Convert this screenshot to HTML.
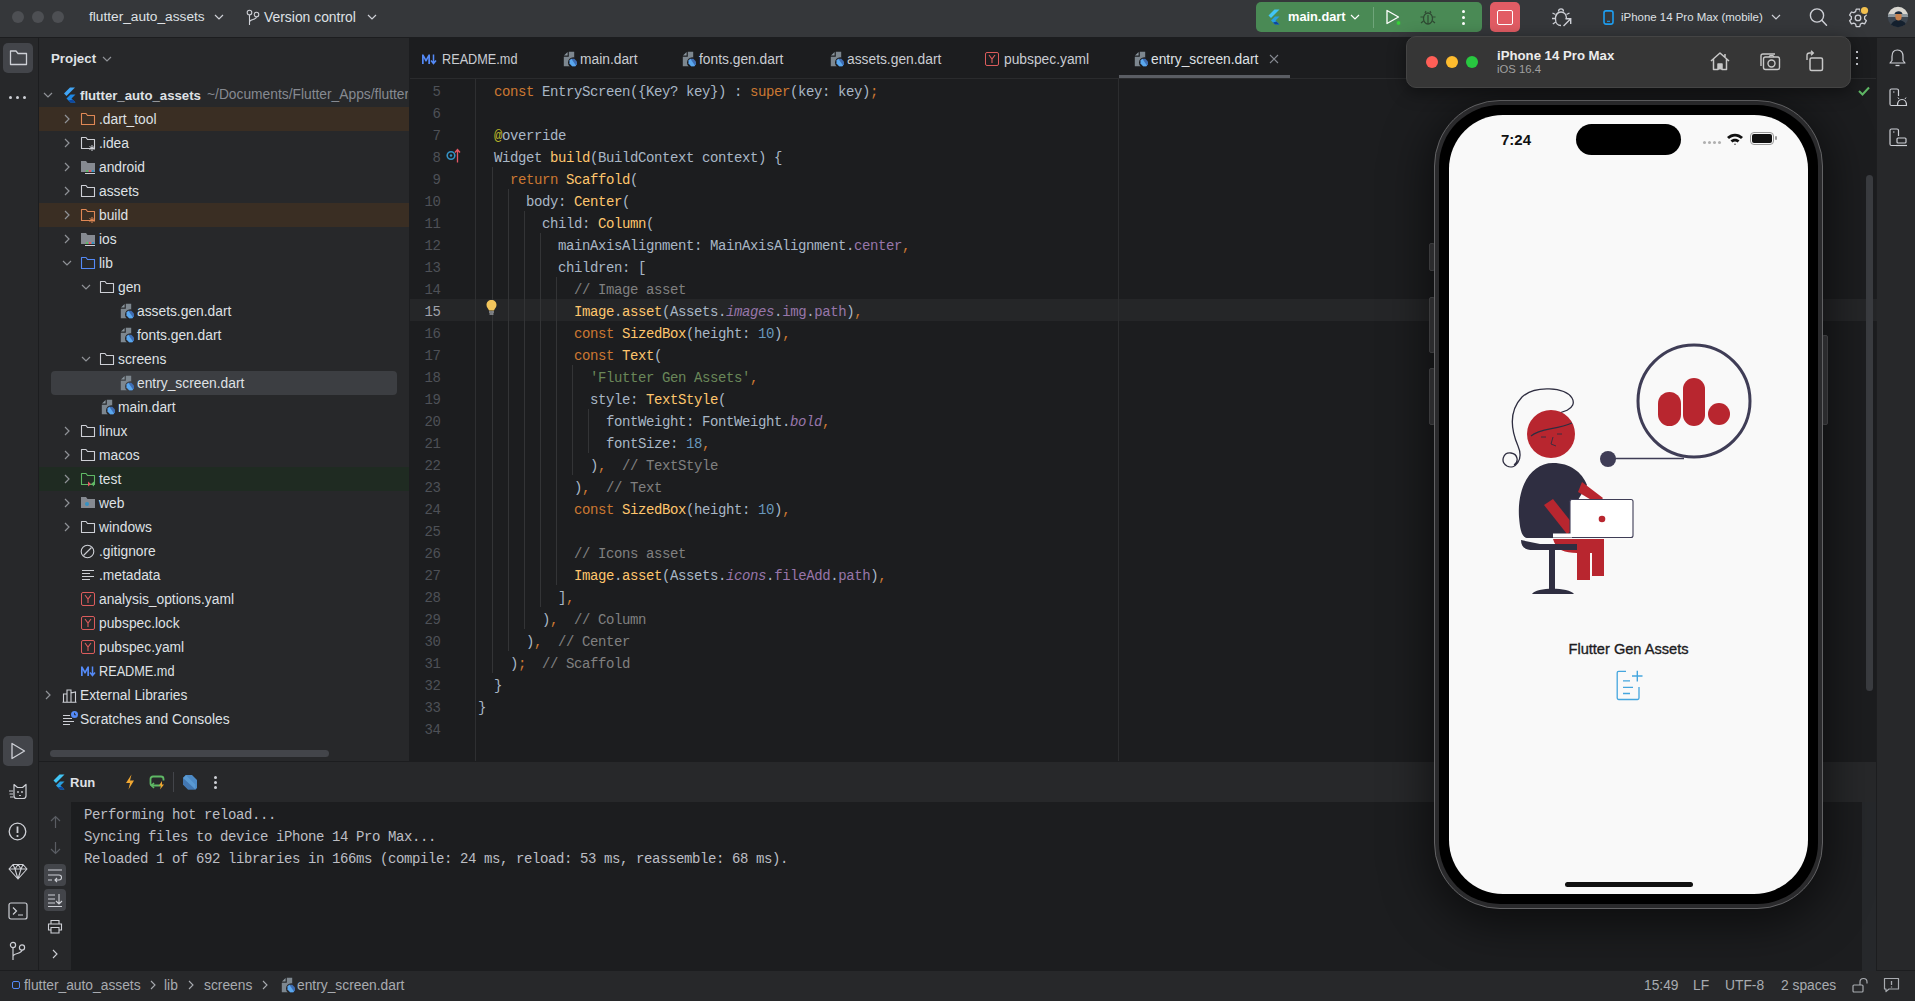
<!DOCTYPE html>
<html><head><meta charset="utf-8">
<style>
*{margin:0;padding:0;box-sizing:border-box}
html,body{width:1915px;height:1001px;overflow:hidden;background:#27282a;font-family:"Liberation Sans",sans-serif;color:#dfe1e5}
.a{position:absolute}
.mono{font-family:"Liberation Mono",monospace}
svg{position:absolute;overflow:visible}
.t{position:absolute;white-space:pre;font-size:13.8px;line-height:16px}
/* code */
.cl{position:absolute;left:478px;white-space:pre;font-family:"Liberation Mono",monospace;font-size:14px;letter-spacing:-0.4px;line-height:22px;height:22px;color:#a9b7c6;padding-top:2px}
.ln{position:absolute;left:410px;width:30.5px;text-align:right;font-family:"Liberation Mono",monospace;font-size:14px;letter-spacing:-0.4px;line-height:22px;color:#4e5157;padding-top:2px}
.k{color:#cc7832}.c{color:#ffc66d}.f{color:#9876aa}.n{color:#6897bb}.cm{color:#808080}.s{color:#6a8759}.an{color:#bbb529}.i{font-style:italic}
.g{position:absolute;width:1px;background:#333436}
.ln.cur{color:#a1a3ab}
</style></head>
<body>
<!-- title bar -->
<div class="a" style="left:0;top:0;width:1915px;height:37px;background:#35373a"></div>
<div class="a" style="left:0;top:37px;width:1915px;height:1px;background:#1c1d1f"></div>
<!-- left strip -->
<div class="a" style="left:0;top:38px;width:38px;height:933px;background:#27282a"></div>
<div class="a" style="left:38px;top:38px;width:1px;height:933px;background:#1c1d1f"></div>
<!-- project panel -->
<div class="a" style="left:39px;top:38px;width:370px;height:723px;background:#27282a"></div>
<div class="a" style="left:409px;top:38px;width:1px;height:723px;background:#1c1d1f"></div>
<!-- editor -->
<div id="editor" class="a" style="left:410px;top:38px;width:1467px;height:723px;background:#1c1d1f"></div>
<div class="a" style="left:410px;top:78px;width:1467px;height:1px;background:#2a2b2d"></div>
<!-- right strip -->
<div class="a" style="left:1877px;top:38px;width:38px;height:933px;background:#27282a"></div>
<div class="a" style="left:1876px;top:38px;width:1px;height:933px;background:#1c1d1f"></div>
<!-- bottom run panel -->
<div class="a" style="left:39px;top:761px;width:1837px;height:1px;background:#1c1d1f"></div>
<div class="a" style="left:39px;top:762px;width:1837px;height:40px;background:#27282a"></div>
<div class="a" style="left:39px;top:802px;width:32px;height:169px;background:#27282a"></div>
<div class="a" style="left:71px;top:802px;width:1805px;height:169px;background:#1c1d1f"></div>
<!-- status bar -->
<div class="a" style="left:0;top:971px;width:1915px;height:30px;background:#27282a"></div>
<div class="a" style="left:0;top:970px;width:1915px;height:1px;background:#1c1d1f"></div>

<div class="a" style="left:410px;top:299px;width:1467px;height:22px;background:#252628"></div>
<div class="g" style="left:492px;top:167px;height:506px"></div>
<div class="g" style="left:508px;top:189px;height:462px"></div>
<div class="g" style="left:524px;top:211px;height:418px"></div>
<div class="g" style="left:540px;top:233px;height:374px"></div>
<div class="g" style="left:556px;top:277px;height:308px"></div>
<div class="g" style="left:572px;top:365px;height:110px"></div>
<div class="g" style="left:588px;top:409px;height:44px"></div>
<div class="ln" style="top:79px">5</div>
<div class="cl" style="top:79px">  <span class="k">const</span> EntryScreen({Key? key}) : <span class="k">super</span>(key: key)<span class="k">;</span></div>
<div class="ln" style="top:101px">6</div>
<div class="ln" style="top:123px">7</div>
<div class="cl" style="top:123px">  <span class="an">@</span>override</div>
<div class="ln" style="top:145px">8</div>
<div class="cl" style="top:145px">  Widget <span class="c">build</span>(BuildContext context) {</div>
<div class="ln" style="top:167px">9</div>
<div class="cl" style="top:167px">    <span class="k">return</span> <span class="c">Scaffold</span>(</div>
<div class="ln" style="top:189px">10</div>
<div class="cl" style="top:189px">      body: <span class="c">Center</span>(</div>
<div class="ln" style="top:211px">11</div>
<div class="cl" style="top:211px">        child: <span class="c">Column</span>(</div>
<div class="ln" style="top:233px">12</div>
<div class="cl" style="top:233px">          mainAxisAlignment: MainAxisAlignment.<span class="f">center</span><span class="k">,</span></div>
<div class="ln" style="top:255px">13</div>
<div class="cl" style="top:255px">          children: [</div>
<div class="ln" style="top:277px">14</div>
<div class="cl" style="top:277px">            <span class="cm">// Image asset</span></div>
<div class="ln cur" style="top:299px">15</div>
<div class="cl" style="top:299px">            <span class="c">Image</span>.<span class="c">asset</span>(Assets.<span class="f i">images</span>.<span class="f">img</span>.<span class="f">path</span>)<span class="k">,</span></div>
<div class="ln" style="top:321px">16</div>
<div class="cl" style="top:321px">            <span class="k">const</span> <span class="c">SizedBox</span>(height: <span class="n">10</span>)<span class="k">,</span></div>
<div class="ln" style="top:343px">17</div>
<div class="cl" style="top:343px">            <span class="k">const</span> <span class="c">Text</span>(</div>
<div class="ln" style="top:365px">18</div>
<div class="cl" style="top:365px">              <span class="s">&#x27;Flutter Gen Assets&#x27;</span><span class="k">,</span></div>
<div class="ln" style="top:387px">19</div>
<div class="cl" style="top:387px">              style: <span class="c">TextStyle</span>(</div>
<div class="ln" style="top:409px">20</div>
<div class="cl" style="top:409px">                fontWeight: FontWeight.<span class="f i">bold</span><span class="k">,</span></div>
<div class="ln" style="top:431px">21</div>
<div class="cl" style="top:431px">                fontSize: <span class="n">18</span><span class="k">,</span></div>
<div class="ln" style="top:453px">22</div>
<div class="cl" style="top:453px">              )<span class="k">,</span>  <span class="cm">// TextStyle</span></div>
<div class="ln" style="top:475px">23</div>
<div class="cl" style="top:475px">            )<span class="k">,</span>  <span class="cm">// Text</span></div>
<div class="ln" style="top:497px">24</div>
<div class="cl" style="top:497px">            <span class="k">const</span> <span class="c">SizedBox</span>(height: <span class="n">10</span>)<span class="k">,</span></div>
<div class="ln" style="top:519px">25</div>
<div class="ln" style="top:541px">26</div>
<div class="cl" style="top:541px">            <span class="cm">// Icons asset</span></div>
<div class="ln" style="top:563px">27</div>
<div class="cl" style="top:563px">            <span class="c">Image</span>.<span class="c">asset</span>(Assets.<span class="f i">icons</span>.<span class="f">fileAdd</span>.<span class="f">path</span>)<span class="k">,</span></div>
<div class="ln" style="top:585px">28</div>
<div class="cl" style="top:585px">          ]<span class="k">,</span></div>
<div class="ln" style="top:607px">29</div>
<div class="cl" style="top:607px">        )<span class="k">,</span>  <span class="cm">// Column</span></div>
<div class="ln" style="top:629px">30</div>
<div class="cl" style="top:629px">      )<span class="k">,</span>  <span class="cm">// Center</span></div>
<div class="ln" style="top:651px">31</div>
<div class="cl" style="top:651px">    )<span class="k">;</span>  <span class="cm">// Scaffold</span></div>
<div class="ln" style="top:673px">32</div>
<div class="cl" style="top:673px">  }</div>
<div class="ln" style="top:695px">33</div>
<div class="cl" style="top:695px">}</div>
<div class="ln" style="top:717px">34</div>
<div class="a" style="left:39px;top:107px;width:370px;height:24px;background:#3a2e23"></div>
<div class="a" style="left:39px;top:203px;width:370px;height:24px;background:#3a2e23"></div>
<div class="a" style="left:39px;top:467px;width:370px;height:24px;background:#1f2b22"></div>
<div class="a" style="left:51px;top:371px;width:346px;height:24px;background:#3c3e42;border-radius:4px"></div>
<div class="t" style="left:51px;top:51px;font-weight:bold;color:#dfe1e5;font-size:13.3px">Project</div>
<svg style="left:102px;top:56px" width="10" height="6"><path d="M1 1 L5 5 L9 1" fill="none" stroke="#8f9297" stroke-width="1.2"/></svg>
<svg style="left:43px;top:92px" width="10" height="6"><path d="M1 1 L5 5 L9 1" fill="none" stroke="#8f9297" stroke-width="1.2"/></svg>
<svg style="left:63px;top:87px" width="13" height="16"><path d="M7 0.5 L12 0.5 L3.5 9 L1 6.5 Z" fill="#42a5f5"/><path d="M7.5 7.5 H12.5 L8.5 11.5 L12.5 15.5 H7.5 L3.5 11.5 Z" fill="#1e88e5"/><path d="M5.5 13.5 L7.5 15.5 H12.5 L9.5 12.5Z" fill="#0d47a1"/></svg>
<div class="t" style="left:80px;top:88px;font-weight:bold;color:#dfe1e5;font-size:13.2px">flutter_auto_assets</div>
<div class="a" style="left:207px;top:87px;width:201px;height:16px;overflow:hidden"><div class="t" style="left:0;top:0;color:#868a91;font-size:13.8px">~/Documents/Flutter_Apps/flutter_auto_assets</div></div>
<svg style="left:64px;top:114px" width="6" height="10"><path d="M1 1 L5 5 L1 9" fill="none" stroke="#8f9297" stroke-width="1.2"/></svg>
<svg style="left:80px;top:112px" width="16" height="14"><path d="M1.5 1.5 H6 L7.5 3.5 H14.5 V12.5 H1.5 Z" fill="none" stroke="#e08855" stroke-width="1.1" stroke-linejoin="round"/></svg>
<div class="t" style="left:99px;top:112px;color:#dfe1e5;font-size:13.8px">.dart_tool</div>
<svg style="left:64px;top:138px" width="6" height="10"><path d="M1 1 L5 5 L1 9" fill="none" stroke="#8f9297" stroke-width="1.2"/></svg>
<svg style="left:80px;top:136px" width="16" height="14"><path d="M1.5 1.5 H6 L7.5 3.5 H14.5 V12.5 H1.5 Z" fill="none" stroke="#ced0d6" stroke-width="1.1" stroke-linejoin="round"/><path d="M12 9 V15 M9.5 10.5 L14.5 13.5 M9.5 13.5 L14.5 10.5" stroke="#ced0d6" stroke-width="1"/></svg>
<div class="t" style="left:99px;top:136px;color:#dfe1e5;font-size:13.8px">.idea</div>
<svg style="left:64px;top:162px" width="6" height="10"><path d="M1 1 L5 5 L1 9" fill="none" stroke="#8f9297" stroke-width="1.2"/></svg>
<svg style="left:80px;top:160px" width="16" height="15"><path d="M1 1 H6 L7.5 3 H15 V12 H1 Z" fill="#868a91"/><rect x="6" y="10" width="2" height="2" fill="#5fb865"/><rect x="9" y="10" width="2" height="2" fill="#e55765"/><rect x="12" y="10" width="2" height="2" fill="#3592c4"/><rect x="5" y="13" width="10" height="1" fill="#ced0d6"/></svg>
<div class="t" style="left:99px;top:160px;color:#dfe1e5;font-size:13.8px">android</div>
<svg style="left:64px;top:186px" width="6" height="10"><path d="M1 1 L5 5 L1 9" fill="none" stroke="#8f9297" stroke-width="1.2"/></svg>
<svg style="left:80px;top:184px" width="16" height="14"><path d="M1.5 1.5 H6 L7.5 3.5 H14.5 V12.5 H1.5 Z" fill="none" stroke="#ced0d6" stroke-width="1.1" stroke-linejoin="round"/></svg>
<div class="t" style="left:99px;top:184px;color:#dfe1e5;font-size:13.8px">assets</div>
<svg style="left:64px;top:210px" width="6" height="10"><path d="M1 1 L5 5 L1 9" fill="none" stroke="#8f9297" stroke-width="1.2"/></svg>
<svg style="left:80px;top:208px" width="16" height="14"><path d="M1.5 1.5 H6 L7.5 3.5 H14.5 V12.5 H1.5 Z" fill="none" stroke="#e08855" stroke-width="1.1" stroke-linejoin="round"/><path d="M12 9 V15 M9.5 10.5 L14.5 13.5 M9.5 13.5 L14.5 10.5" stroke="#e08855" stroke-width="1"/></svg>
<div class="t" style="left:99px;top:208px;color:#dfe1e5;font-size:13.8px">build</div>
<svg style="left:64px;top:234px" width="6" height="10"><path d="M1 1 L5 5 L1 9" fill="none" stroke="#8f9297" stroke-width="1.2"/></svg>
<svg style="left:80px;top:232px" width="16" height="15"><path d="M1 1 H6 L7.5 3 H15 V12 H1 Z" fill="#868a91"/><rect x="6" y="10" width="2" height="2" fill="#5fb865"/><rect x="9" y="10" width="2" height="2" fill="#e55765"/><rect x="12" y="10" width="2" height="2" fill="#3592c4"/><rect x="5" y="13" width="10" height="1" fill="#ced0d6"/></svg>
<div class="t" style="left:99px;top:232px;color:#dfe1e5;font-size:13.8px">ios</div>
<svg style="left:62px;top:260px" width="10" height="6"><path d="M1 1 L5 5 L9 1" fill="none" stroke="#8f9297" stroke-width="1.2"/></svg>
<svg style="left:80px;top:256px" width="16" height="14"><path d="M1.5 1.5 H6 L7.5 3.5 H14.5 V12.5 H1.5 Z" fill="none" stroke="#548af7" stroke-width="1.1" stroke-linejoin="round"/></svg>
<div class="t" style="left:99px;top:256px;color:#dfe1e5;font-size:13.8px">lib</div>
<svg style="left:81px;top:284px" width="10" height="6"><path d="M1 1 L5 5 L9 1" fill="none" stroke="#8f9297" stroke-width="1.2"/></svg>
<svg style="left:99px;top:280px" width="16" height="14"><path d="M1.5 1.5 H6 L7.5 3.5 H14.5 V12.5 H1.5 Z" fill="none" stroke="#ced0d6" stroke-width="1.1" stroke-linejoin="round"/></svg>
<div class="t" style="left:118px;top:280px;color:#dfe1e5;font-size:13.8px">gen</div>
<svg style="left:120px;top:303px" width="16" height="16"><path d="M1 4.6 L4.6 1 V4.6 Z" fill="#8a959d"/><path d="M5.8 0.8 H11.2 V15.2 H0.8 V5.8 H5.8 Z" fill="#7d878f"/><circle cx="10.3" cy="11.6" r="5.3" fill="#27282a"/><path d="M8.3 7.8 H11.3 L14 10.5 V13.6 L12.3 15.3 H9.2 L6.6 12.6 V9.5 Z" fill="#3f6db3"/><path d="M8.3 7.8 L6.6 9.5 V12.6 L9.2 15.3 H12.3 L13 14.6 Z" fill="#5aa8ee"/></svg>
<div class="t" style="left:137px;top:304px;color:#dfe1e5;font-size:13.8px">assets.gen.dart</div>
<svg style="left:120px;top:327px" width="16" height="16"><path d="M1 4.6 L4.6 1 V4.6 Z" fill="#8a959d"/><path d="M5.8 0.8 H11.2 V15.2 H0.8 V5.8 H5.8 Z" fill="#7d878f"/><circle cx="10.3" cy="11.6" r="5.3" fill="#27282a"/><path d="M8.3 7.8 H11.3 L14 10.5 V13.6 L12.3 15.3 H9.2 L6.6 12.6 V9.5 Z" fill="#3f6db3"/><path d="M8.3 7.8 L6.6 9.5 V12.6 L9.2 15.3 H12.3 L13 14.6 Z" fill="#5aa8ee"/></svg>
<div class="t" style="left:137px;top:328px;color:#dfe1e5;font-size:13.8px">fonts.gen.dart</div>
<svg style="left:81px;top:356px" width="10" height="6"><path d="M1 1 L5 5 L9 1" fill="none" stroke="#8f9297" stroke-width="1.2"/></svg>
<svg style="left:99px;top:352px" width="16" height="14"><path d="M1.5 1.5 H6 L7.5 3.5 H14.5 V12.5 H1.5 Z" fill="none" stroke="#ced0d6" stroke-width="1.1" stroke-linejoin="round"/></svg>
<div class="t" style="left:118px;top:352px;color:#dfe1e5;font-size:13.8px">screens</div>
<svg style="left:120px;top:375px" width="16" height="16"><path d="M1 4.6 L4.6 1 V4.6 Z" fill="#8a959d"/><path d="M5.8 0.8 H11.2 V15.2 H0.8 V5.8 H5.8 Z" fill="#7d878f"/><circle cx="10.3" cy="11.6" r="5.3" fill="#3c3e42"/><path d="M8.3 7.8 H11.3 L14 10.5 V13.6 L12.3 15.3 H9.2 L6.6 12.6 V9.5 Z" fill="#3f6db3"/><path d="M8.3 7.8 L6.6 9.5 V12.6 L9.2 15.3 H12.3 L13 14.6 Z" fill="#5aa8ee"/></svg>
<div class="t" style="left:137px;top:376px;color:#dfe1e5;font-size:13.8px">entry_screen.dart</div>
<svg style="left:101px;top:399px" width="16" height="16"><path d="M1 4.6 L4.6 1 V4.6 Z" fill="#8a959d"/><path d="M5.8 0.8 H11.2 V15.2 H0.8 V5.8 H5.8 Z" fill="#7d878f"/><circle cx="10.3" cy="11.6" r="5.3" fill="#27282a"/><path d="M8.3 7.8 H11.3 L14 10.5 V13.6 L12.3 15.3 H9.2 L6.6 12.6 V9.5 Z" fill="#3f6db3"/><path d="M8.3 7.8 L6.6 9.5 V12.6 L9.2 15.3 H12.3 L13 14.6 Z" fill="#5aa8ee"/></svg>
<div class="t" style="left:118px;top:400px;color:#dfe1e5;font-size:13.8px">main.dart</div>
<svg style="left:64px;top:426px" width="6" height="10"><path d="M1 1 L5 5 L1 9" fill="none" stroke="#8f9297" stroke-width="1.2"/></svg>
<svg style="left:80px;top:424px" width="16" height="14"><path d="M1.5 1.5 H6 L7.5 3.5 H14.5 V12.5 H1.5 Z" fill="none" stroke="#ced0d6" stroke-width="1.1" stroke-linejoin="round"/></svg>
<div class="t" style="left:99px;top:424px;color:#dfe1e5;font-size:13.8px">linux</div>
<svg style="left:64px;top:450px" width="6" height="10"><path d="M1 1 L5 5 L1 9" fill="none" stroke="#8f9297" stroke-width="1.2"/></svg>
<svg style="left:80px;top:448px" width="16" height="14"><path d="M1.5 1.5 H6 L7.5 3.5 H14.5 V12.5 H1.5 Z" fill="none" stroke="#ced0d6" stroke-width="1.1" stroke-linejoin="round"/></svg>
<div class="t" style="left:99px;top:448px;color:#dfe1e5;font-size:13.8px">macos</div>
<svg style="left:64px;top:474px" width="6" height="10"><path d="M1 1 L5 5 L1 9" fill="none" stroke="#8f9297" stroke-width="1.2"/></svg>
<svg style="left:80px;top:472px" width="16" height="14"><path d="M1.5 1.5 H6 L7.5 3.5 H14.5 V12.5 H1.5 Z" fill="none" stroke="#5fb865" stroke-width="1.1" stroke-linejoin="round"/><path d="M8 9.5 L11 12 L8 14.5Z" fill="#e55765"/><path d="M14 9.5 L11 12 L14 14.5Z" fill="#5fb865"/></svg>
<div class="t" style="left:99px;top:472px;color:#dfe1e5;font-size:13.8px">test</div>
<svg style="left:64px;top:498px" width="6" height="10"><path d="M1 1 L5 5 L1 9" fill="none" stroke="#8f9297" stroke-width="1.2"/></svg>
<svg style="left:80px;top:496px" width="16" height="15"><path d="M1 1 H6 L7.5 3 H15 V12 H1 Z" fill="#868a91"/><circle cx="7" cy="8" r="2" fill="#3592c4"/></svg>
<div class="t" style="left:99px;top:496px;color:#dfe1e5;font-size:13.8px">web</div>
<svg style="left:64px;top:522px" width="6" height="10"><path d="M1 1 L5 5 L1 9" fill="none" stroke="#8f9297" stroke-width="1.2"/></svg>
<svg style="left:80px;top:520px" width="16" height="14"><path d="M1.5 1.5 H6 L7.5 3.5 H14.5 V12.5 H1.5 Z" fill="none" stroke="#ced0d6" stroke-width="1.1" stroke-linejoin="round"/></svg>
<div class="t" style="left:99px;top:520px;color:#dfe1e5;font-size:13.8px">windows</div>
<svg style="left:80px;top:544px" width="15" height="15"><circle cx="7.5" cy="7.5" r="6.3" fill="none" stroke="#ced0d6" stroke-width="1.1"/><path d="M3.5 11.5 L11.5 3.5" stroke="#ced0d6" stroke-width="1.1"/></svg>
<div class="t" style="left:99px;top:544px;color:#dfe1e5;font-size:13.8px">.gitignore</div>
<svg style="left:81px;top:568px" width="14" height="14"><path d="M1 2.5 H13 M1 5.5 H9 M1 8.5 H13 M1 11.5 H9" stroke="#ced0d6" stroke-width="1.1"/></svg>
<div class="t" style="left:99px;top:568px;color:#dfe1e5;font-size:13.8px">.metadata</div>
<svg style="left:81px;top:592px" width="14" height="14"><rect x="0.5" y="0.5" width="13" height="13" rx="1.5" fill="none" stroke="#db5c5c" stroke-width="1"/><path d="M4 3 L7 7 L10 3 M7 7 V11" fill="none" stroke="#db5c5c" stroke-width="1.1"/></svg>
<div class="t" style="left:99px;top:592px;color:#dfe1e5;font-size:13.8px">analysis_options.yaml</div>
<svg style="left:81px;top:616px" width="14" height="14"><rect x="0.5" y="0.5" width="13" height="13" rx="1.5" fill="none" stroke="#db5c5c" stroke-width="1"/><path d="M4 3 L7 7 L10 3 M7 7 V11" fill="none" stroke="#db5c5c" stroke-width="1.1"/></svg>
<div class="t" style="left:99px;top:616px;color:#dfe1e5;font-size:13.8px">pubspec.lock</div>
<svg style="left:81px;top:640px" width="14" height="14"><rect x="0.5" y="0.5" width="13" height="13" rx="1.5" fill="none" stroke="#db5c5c" stroke-width="1"/><path d="M4 3 L7 7 L10 3 M7 7 V11" fill="none" stroke="#db5c5c" stroke-width="1.1"/></svg>
<div class="t" style="left:99px;top:640px;color:#dfe1e5;font-size:13.8px">pubspec.yaml</div>
<svg style="left:80px;top:665px" width="16" height="12"><path d="M1 11 V1.5 H2.5 L5 6 L7.5 1.5 H9 V11 H7.3 V5 L5.6 8.5 H4.4 L2.7 5 V11 Z" fill="#548af7"/><path d="M12.5 1.5 V10 M10 7.5 L12.5 10.5 L15 7.5" fill="none" stroke="#548af7" stroke-width="1.5"/></svg>
<div class="t" style="left:99px;top:664px;color:#dfe1e5;font-size:13.8px;transform:scaleX(0.92);transform-origin:0 0">README.md</div>
<svg style="left:45px;top:690px" width="6" height="10"><path d="M1 1 L5 5 L1 9" fill="none" stroke="#8f9297" stroke-width="1.2"/></svg>
<svg style="left:62px;top:688px" width="15" height="15"><path d="M1.5 14 V6 H5 V14 M5 14 V2 H9 V14 M9 14 V5 L13.5 4 V14 M0.5 14.2 H14.5" fill="none" stroke="#ced0d6" stroke-width="1.1"/></svg>
<div class="t" style="left:80px;top:688px;color:#dfe1e5;font-size:13.8px">External Libraries</div>
<svg style="left:62px;top:711px" width="16" height="15"><path d="M1 4.5 H8 M1 7.5 H10 M1 10.5 H12 M1 13.5 H8" stroke="#ced0d6" stroke-width="1.1"/><circle cx="12.5" cy="3.5" r="3.5" fill="#548af7"/><path d="M12.5 1.8 V3.8 H14" stroke="#27282a" stroke-width="0.9" fill="none"/></svg>
<div class="t" style="left:80px;top:712px;color:#dfe1e5;font-size:13.8px">Scratches and Consoles</div>
<div class="a" style="left:50px;top:750px;width:279px;height:7px;border-radius:4px;background:#43454a"></div>
<!-- ===== TITLE BAR ===== -->
<div class="a" style="left:12px;top:11px;width:12px;height:12px;border-radius:6px;background:#4d4f53"></div>
<div class="a" style="left:32px;top:11px;width:12px;height:12px;border-radius:6px;background:#4d4f53"></div>
<div class="a" style="left:52px;top:11px;width:12px;height:12px;border-radius:6px;background:#4d4f53"></div>
<div class="t" style="left:89px;top:9px;font-size:13.7px;color:#dfe1e5">flutter_auto_assets</div>
<svg style="left:214px;top:14px" width="10" height="6"><path d="M1 1 L5 5 L9 1" fill="none" stroke="#ced0d6" stroke-width="1.2"/></svg>
<svg style="left:246px;top:9px" width="14" height="17"><circle cx="3.5" cy="3.5" r="2.3" fill="none" stroke="#ced0d6" stroke-width="1.1"/><circle cx="10.5" cy="5.5" r="2.3" fill="none" stroke="#ced0d6" stroke-width="1.1"/><path d="M3.5 6 V16 M10.5 8 C10.5 11 3.5 10 3.5 13" fill="none" stroke="#ced0d6" stroke-width="1.1"/></svg>
<div class="t" style="left:264px;top:9px;font-size:13.9px;color:#dfe1e5">Version control</div>
<svg style="left:367px;top:14px" width="10" height="6"><path d="M1 1 L5 5 L9 1" fill="none" stroke="#ced0d6" stroke-width="1.2"/></svg>

<!-- run widget -->
<div class="a" style="left:1256px;top:2px;width:226px;height:30px;border-radius:5px;background:#4a8a55"></div>
<svg style="left:1268px;top:9px" width="12" height="16"><path d="M6.5 0.5 L11.5 0.5 L3 9 L0.5 6.5 Z" fill="#42c5f5"/><path d="M7 7.5 H11.5 L7.5 11.5 L11.5 15.5 H7 L3 11.5 Z" fill="#29a0e0"/><path d="M5 13.5 L7 15.5 H11.5 L8.5 12.5Z" fill="#0d47a1"/></svg>
<div class="t" style="left:1288px;top:9px;font-size:12.8px;font-weight:bold;color:#ffffff">main.dart</div>
<svg style="left:1350px;top:14px" width="10" height="6"><path d="M1 1 L5 5 L9 1" fill="none" stroke="#ffffff" stroke-width="1.2"/></svg>
<div class="a" style="left:1373px;top:7px;width:1px;height:21px;background:#6fa57a"></div>
<svg style="left:1385px;top:9px" width="16" height="17"><path d="M2 1.5 L13.5 8 L2 14.5 Z" fill="none" stroke="#ffffff" stroke-width="1.3" stroke-linejoin="round"/><circle cx="13.5" cy="14" r="2.3" fill="#35d335" stroke="#4a8a55" stroke-width="0.8"/></svg>
<svg style="left:1419px;top:9px" width="18" height="17"><ellipse cx="9" cy="9.5" rx="4.5" ry="5.5" fill="none" stroke="#2f4a33" stroke-width="1.3"/><path d="M6 4 L7 2 M12 4 L11 2 M4.5 8 H1.5 M13.5 8 H16.5 M4.5 12 L2 14 M13.5 12 L16 14 M9 6 V15" fill="none" stroke="#2f4a33" stroke-width="1.2"/></svg>
<div class="a" style="left:1462px;top:10px;width:3px;height:3px;border-radius:2px;background:#fff"></div>
<div class="a" style="left:1462px;top:16px;width:3px;height:3px;border-radius:2px;background:#fff"></div>
<div class="a" style="left:1462px;top:22px;width:3px;height:3px;border-radius:2px;background:#fff"></div>
<div class="a" style="left:1490px;top:2px;width:30px;height:30px;border-radius:5px;background:#e25c64"></div>
<div class="a" style="left:1497px;top:10px;width:16px;height:15px;border-radius:2px;border:1.6px solid #fff"></div>
<!-- attach debugger -->
<svg style="left:1551px;top:7px" width="22" height="21"><path d="M7.5 4.5 C7.5 2.8 8.6 1.8 10 1.8 C11.4 1.8 12.5 2.8 12.5 4.5" fill="none" stroke="#ced0d6" stroke-width="1.3"/><path d="M15.5 12 C15.5 8 13.5 5 10 5 C6.5 5 4.5 8 4.5 12 C4.5 16 6.8 18.5 10 18.5" fill="none" stroke="#ced0d6" stroke-width="1.3"/><path d="M4.5 7.5 L1.5 6 M4.3 11.5 H1 M4.8 15 L1.8 17 M15.5 7.5 L18.5 6" fill="none" stroke="#ced0d6" stroke-width="1.3"/><path d="M12.5 19 L19.5 12 M14.5 11.8 H19.7 V17" fill="none" stroke="#ced0d6" stroke-width="1.4"/></svg>
<!-- device -->
<svg style="left:1603px;top:10px" width="11" height="15"><rect x="1" y="0.9" width="9" height="13.2" rx="2" fill="none" stroke="#1e9ff2" stroke-width="1.6"/><path d="M4 11.3 H7" stroke="#1e9ff2" stroke-width="1"/></svg>
<div class="t" style="left:1621px;top:9px;font-size:11.45px;color:#dfe1e5">iPhone 14 Pro Max (mobile)</div>
<svg style="left:1771px;top:14px" width="10" height="6"><path d="M1 1 L5 5 L9 1" fill="none" stroke="#ced0d6" stroke-width="1.2"/></svg>
<!-- search -->
<svg style="left:1809px;top:8px" width="19" height="19"><circle cx="8" cy="7.5" r="6.6" fill="none" stroke="#ced0d6" stroke-width="1.4"/><path d="M12.8 12.3 L17.5 17.2" stroke="#ced0d6" stroke-width="1.5" stroke-linecap="round"/></svg>
<!-- settings -->
<svg style="left:1847px;top:7px" width="22" height="21"><path d="M9.2 2.2 H12.8 L13.4 4.6 C14.1 4.9 14.7 5.2 15.3 5.7 L17.6 5 L19.4 8.1 L17.6 9.8 C17.7 10.5 17.7 11.3 17.6 12 L19.4 13.7 L17.6 16.8 L15.3 16.1 C14.7 16.6 14.1 16.9 13.4 17.2 L12.8 19.6 H9.2 L8.6 17.2 C7.9 16.9 7.3 16.6 6.7 16.1 L4.4 16.8 L2.6 13.7 L4.4 12 C4.3 11.3 4.3 10.5 4.4 9.8 L2.6 8.1 L4.4 5 L6.7 5.7 C7.3 5.2 7.9 4.9 8.6 4.6 Z" fill="none" stroke="#ced0d6" stroke-width="1.3" stroke-linejoin="round"/><circle cx="11" cy="10.9" r="2.8" fill="none" stroke="#ced0d6" stroke-width="1.3"/><circle cx="17.5" cy="3.5" r="4.6" fill="#35373a"/><circle cx="17.5" cy="3.5" r="3.6" fill="#f2c04e"/></svg>
<!-- avatar -->
<svg style="left:1887px;top:6px" width="22" height="22"><defs><clipPath id="av"><circle cx="11" cy="11" r="10.2"/></clipPath></defs><g clip-path="url(#av)"><rect width="22" height="22" fill="#3d4650"/><rect width="22" height="9" fill="#d9d6cf"/><rect x="0" y="8" width="22" height="3" fill="#8c969c"/><path d="M3 22 C4 16 8 14 11 14 C15 14 19 16 21 22Z" fill="#14202e"/><ellipse cx="11.5" cy="10.5" rx="3.2" ry="4" fill="#c9834f"/><path d="M7.5 8 C8 4.5 15 4 15.5 8 Z" fill="#1a2a3c"/></g></svg>
<!-- ===== LEFT STRIP ===== -->
<div class="a" style="left:3px;top:43px;width:30px;height:30px;border-radius:5px;background:#43454a"></div>
<svg style="left:9px;top:49px" width="19" height="17"><path d="M1.5 2 H7 L9 4.5 H17.5 V15.5 H1.5 Z" fill="none" stroke="#ced0d6" stroke-width="1.3" stroke-linejoin="round"/></svg>
<div class="a" style="left:9px;top:96px;width:3px;height:3px;border-radius:2px;background:#ced0d6"></div>
<div class="a" style="left:16px;top:96px;width:3px;height:3px;border-radius:2px;background:#ced0d6"></div>
<div class="a" style="left:23px;top:96px;width:3px;height:3px;border-radius:2px;background:#ced0d6"></div>

<div class="a" style="left:3px;top:736px;width:30px;height:30px;border-radius:5px;background:#43454a"></div>
<svg style="left:10px;top:742px" width="16" height="18"><path d="M2 1.5 L14.5 9 L2 16.5 Z" fill="none" stroke="#ced0d6" stroke-width="1.3" stroke-linejoin="round"/></svg>
<!-- cat -->
<svg style="left:8px;top:783px" width="20" height="17"><path d="M6 5 L6 1.5 L9.5 4.5 H14.5 L18 1.5 V13 C18 15 17 15.5 15 15.5 H9 C7 15.5 6 15 6 13 Z" fill="none" stroke="#ced0d6" stroke-width="1.2" stroke-linejoin="round"/><path d="M1 8 H5 M1.5 11 H5 M2 14 H5.5" stroke="#ced0d6" stroke-width="1.2"/><circle cx="10" cy="9" r="0.9" fill="#ced0d6"/><circle cx="14" cy="9" r="0.9" fill="#ced0d6"/><path d="M11 12 L12 13 L13 12" stroke="#ced0d6" fill="none" stroke-width="0.9"/></svg>
<!-- problems -->
<svg style="left:8px;top:822px" width="19" height="19"><circle cx="9.5" cy="9.5" r="8.3" fill="none" stroke="#ced0d6" stroke-width="1.3"/><path d="M9.5 4.5 V11" stroke="#ced0d6" stroke-width="1.8"/><circle cx="9.5" cy="14" r="1.1" fill="#ced0d6"/></svg>
<!-- gem -->
<svg style="left:8px;top:863px" width="20" height="17"><path d="M1 6 L5 1.5 H15 L19 6 L10 16 Z M1 6 H19 M7 6 L10 16 L13 6 M5 1.5 L7 6 L10 1.5 L13 6 L15 1.5" fill="none" stroke="#ced0d6" stroke-width="1.1" stroke-linejoin="round"/></svg>
<!-- terminal -->
<svg style="left:8px;top:902px" width="20" height="18"><rect x="1" y="1" width="18" height="16" rx="2" fill="none" stroke="#ced0d6" stroke-width="1.2"/><path d="M5 5.5 L8.5 9 L5 12.5 M10 13 H15" fill="none" stroke="#ced0d6" stroke-width="1.2"/></svg>
<!-- git -->
<svg style="left:9px;top:941px" width="18" height="20"><circle cx="4" cy="4" r="2.6" fill="none" stroke="#ced0d6" stroke-width="1.2"/><circle cx="13" cy="6.5" r="2.6" fill="none" stroke="#ced0d6" stroke-width="1.2"/><path d="M4 6.6 V19 M13 9.1 C13 13 4 12 4 15.5" fill="none" stroke="#ced0d6" stroke-width="1.2"/></svg>

<!-- ===== RIGHT STRIP ===== -->
<svg style="left:1888px;top:48px" width="19" height="20"><path d="M9.5 2 C5.5 2 4 5 4 8.5 V12.5 L2 15 H17 L15 12.5 V8.5 C15 5 13.5 2 9.5 2 Z" fill="none" stroke="#ced0d6" stroke-width="1.2" stroke-linejoin="round"/><path d="M7.5 17.5 H11.5" stroke="#ced0d6" stroke-width="1.3"/></svg>
<svg style="left:1889px;top:88px" width="18" height="20"><path d="M8 17.5 H2.5 C1.5 17.5 1 17 1 16 V2.5 C1 1.5 1.5 1 2.5 1 H8 C9 1 9.5 1.5 9.5 2.5 V8" fill="none" stroke="#ced0d6" stroke-width="1.2"/><path d="M4 4 H5.5" stroke="#ced0d6" stroke-width="1.2"/><path d="M8.5 17.5 C8.5 13.5 10.5 11.5 13 11.5 C15.5 11.5 17.5 13.5 17.5 17.5 Z" fill="none" stroke="#ced0d6" stroke-width="1.2"/><path d="M10 11 L9 9.5 M16 11 L17 9.5" stroke="#ced0d6" stroke-width="1"/></svg>
<svg style="left:1889px;top:128px" width="18" height="20"><path d="M8 17.5 H2.5 C1.5 17.5 1 17 1 16 V2.5 C1 1.5 1.5 1 2.5 1 H8 C9 1 9.5 1.5 9.5 2.5 V8" fill="none" stroke="#ced0d6" stroke-width="1.2"/><path d="M4 4 H5.5" stroke="#ced0d6" stroke-width="1.2"/><rect x="8" y="10" width="9" height="5" rx="1" fill="none" stroke="#ced0d6" stroke-width="1.2"/><path d="M7 17.5 H18" stroke="#ced0d6" stroke-width="1.2"/></svg>

<!-- ===== TABS ===== -->
<svg style="left:421px;top:53px" width="16" height="12"><path d="M1 11 V1.5 H2.5 L5 6 L7.5 1.5 H9 V11 H7.3 V5 L5.6 8.5 H4.4 L2.7 5 V11 Z" fill="#548af7"/><path d="M12.5 1.5 V10 M10 7.5 L12.5 10.5 L15 7.5" fill="none" stroke="#548af7" stroke-width="1.5"/></svg>
<div class="t" style="left:442px;top:52px;color:#c9ccd2;transform:scaleX(0.92);transform-origin:0 0">README.md</div>
<svg style="left:563px;top:51px" width="16" height="16"><path d="M1 4.6 L4.6 1 V4.6 Z" fill="#8a959d"/><path d="M5.8 0.8 H11.2 V15.2 H0.8 V5.8 H5.8 Z" fill="#7d878f"/><circle cx="10.3" cy="11.6" r="5.3" fill="#1c1d1f"/><path d="M8.3 7.8 H11.3 L14 10.5 V13.6 L12.3 15.3 H9.2 L6.6 12.6 V9.5 Z" fill="#3f6db3"/><path d="M8.3 7.8 L6.6 9.5 V12.6 L9.2 15.3 H12.3 L13 14.6 Z" fill="#5aa8ee"/></svg>
<div class="t" style="left:580px;top:52px;color:#c9ccd2">main.dart</div>
<svg style="left:682px;top:51px" width="16" height="16"><path d="M1 4.6 L4.6 1 V4.6 Z" fill="#8a959d"/><path d="M5.8 0.8 H11.2 V15.2 H0.8 V5.8 H5.8 Z" fill="#7d878f"/><circle cx="10.3" cy="11.6" r="5.3" fill="#1c1d1f"/><path d="M8.3 7.8 H11.3 L14 10.5 V13.6 L12.3 15.3 H9.2 L6.6 12.6 V9.5 Z" fill="#3f6db3"/><path d="M8.3 7.8 L6.6 9.5 V12.6 L9.2 15.3 H12.3 L13 14.6 Z" fill="#5aa8ee"/></svg>
<div class="t" style="left:699px;top:52px;color:#c9ccd2">fonts.gen.dart</div>
<svg style="left:830px;top:51px" width="16" height="16"><path d="M1 4.6 L4.6 1 V4.6 Z" fill="#8a959d"/><path d="M5.8 0.8 H11.2 V15.2 H0.8 V5.8 H5.8 Z" fill="#7d878f"/><circle cx="10.3" cy="11.6" r="5.3" fill="#1c1d1f"/><path d="M8.3 7.8 H11.3 L14 10.5 V13.6 L12.3 15.3 H9.2 L6.6 12.6 V9.5 Z" fill="#3f6db3"/><path d="M8.3 7.8 L6.6 9.5 V12.6 L9.2 15.3 H12.3 L13 14.6 Z" fill="#5aa8ee"/></svg>
<div class="t" style="left:847px;top:52px;color:#c9ccd2">assets.gen.dart</div>
<svg style="left:985px;top:52px" width="14" height="14"><rect x="0.5" y="0.5" width="13" height="13" rx="1.5" fill="none" stroke="#db5c5c" stroke-width="1"/><path d="M4 3 L7 7 L10 3 M7 7 V11" fill="none" stroke="#db5c5c" stroke-width="1.1"/></svg>
<div class="t" style="left:1004px;top:52px;color:#c9ccd2">pubspec.yaml</div>
<svg style="left:1134px;top:51px" width="16" height="16"><path d="M1 4.6 L4.6 1 V4.6 Z" fill="#8a959d"/><path d="M5.8 0.8 H11.2 V15.2 H0.8 V5.8 H5.8 Z" fill="#7d878f"/><circle cx="10.3" cy="11.6" r="5.3" fill="#1c1d1f"/><path d="M8.3 7.8 H11.3 L14 10.5 V13.6 L12.3 15.3 H9.2 L6.6 12.6 V9.5 Z" fill="#3f6db3"/><path d="M8.3 7.8 L6.6 9.5 V12.6 L9.2 15.3 H12.3 L13 14.6 Z" fill="#5aa8ee"/></svg>
<div class="t" style="left:1151px;top:52px;color:#dfe1e5">entry_screen.dart</div>
<svg style="left:1269px;top:54px" width="10" height="10"><path d="M1 1 L9 9 M9 1 L1 9" stroke="#868a91" stroke-width="1.1"/></svg>
<div class="a" style="left:1119px;top:75px;width:171px;height:3px;background:#5a5d63"></div>
<div class="a" style="left:1856px;top:51px;width:2px;height:2px;background:#ced0d6"></div>
<div class="a" style="left:1856px;top:57px;width:2px;height:2px;background:#ced0d6"></div>
<div class="a" style="left:1856px;top:63px;width:2px;height:2px;background:#ced0d6"></div>
<!-- right margin line -->
<div class="a" style="left:1118px;top:79px;width:1px;height:682px;background:#2c2d2f"></div>
<!-- gutter line -->
<div class="a" style="left:475px;top:79px;width:1px;height:682px;background:#2e2f31"></div>
<!-- check -->
<svg style="left:1858px;top:86px" width="12" height="10"><path d="M1 5 L4.5 8.5 L11 1.5" fill="none" stroke="#5fb865" stroke-width="2"/></svg>
<!-- editor scrollbar -->
<div class="a" style="left:1866px;top:175px;width:7px;height:516px;border-radius:4px;background:#3a3c40"></div>
<!-- gutter icons line 8 -->
<svg style="left:446px;top:148px" width="16" height="15"><circle cx="5" cy="7.5" r="3.8" fill="none" stroke="#3592c4" stroke-width="1.6"/><circle cx="5" cy="7.5" r="1.2" fill="#3592c4"/><path d="M11.5 14.5 V2 M9 4.5 L11.5 1.5 L14 4.5" fill="none" stroke="#e55765" stroke-width="1.3"/></svg>
<!-- bulb line 15 -->
<svg style="left:485px;top:299px" width="13" height="17"><path d="M6.5 1 C3.5 1 1.5 3 1.5 6 C1.5 8.5 3.5 9.5 4 11.5 H9 C9.5 9.5 11.5 8.5 11.5 6 C11.5 3 9.5 1 6.5 1 Z" fill="#f2c55c"/><path d="M4 13 H9 M4.5 15 H8.5" stroke="#ced0d6" stroke-width="1.1"/></svg>

<!-- ===== RUN PANEL ===== -->
<svg style="left:53px;top:774px" width="12" height="16"><path d="M6.5 0.5 L11.5 0.5 L3 9 L0.5 6.5 Z" fill="#42c5f5"/><path d="M7 7.5 H11.5 L7.5 11.5 L11.5 15.5 H7 L3 11.5 Z" fill="#29a0e0"/><path d="M5 13.5 L7 15.5 H11.5 L8.5 12.5Z" fill="#0d47a1"/></svg>
<div class="t" style="left:70px;top:775px;font-size:13px;font-weight:bold;color:#dfe1e5">Run</div>
<svg style="left:125px;top:774px" width="10" height="16"><path d="M6.5 0.5 L1 9 H5 L3.5 15.5 L9 6.5 H5 Z" fill="#f0a732"/></svg>
<svg style="left:149px;top:774px" width="17" height="16"><path d="M12 11.5 H3.5 C2 11.5 1.5 10.5 1.5 9.5 V5 C1.5 3.5 2.5 2.5 4 2.5 H12 C13.5 2.5 14.5 3.5 14.5 5 V6.5" fill="none" stroke="#5fb865" stroke-width="1.8"/><path d="M5 9 L2.5 11.5 L5 14" fill="none" stroke="#5fb865" stroke-width="1.6"/><path d="M13 7 L10 11.5 H12 L11 15.5 L15 10.5 H13 Z" fill="#f0a732"/></svg>
<div class="a" style="left:173px;top:772px;width:1px;height:20px;background:#43454a"></div>
<svg style="left:182px;top:774px" width="16" height="16"><path d="M4 1 L10 1 L15 6 V14 L13.5 15.5 H6 L1 10.5 V4 Z" fill="#4d8ac6"/><path d="M4 1 L13.5 10.5 V15.5 L6 15.5 L1 10.5 V4 Z" fill="#3f6fa8" opacity="0.7"/><path d="M1 4 L4 1 L13.5 10.5 L13.5 15.5 Z" fill="#69b0e8" opacity="0.6"/></svg>
<div class="a" style="left:214px;top:776px;width:3px;height:3px;border-radius:2px;background:#ced0d6"></div>
<div class="a" style="left:214px;top:781px;width:3px;height:3px;border-radius:2px;background:#ced0d6"></div>
<div class="a" style="left:214px;top:786px;width:3px;height:3px;border-radius:2px;background:#ced0d6"></div>
<!-- console side toolbar -->
<svg style="left:50px;top:815px" width="11" height="14"><path d="M5.5 13 V1.5 M1 6 L5.5 1.5 L10 6" fill="none" stroke="#5a5d63" stroke-width="1.2"/></svg>
<svg style="left:50px;top:841px" width="11" height="14"><path d="M5.5 1 V12.5 M1 8 L5.5 12.5 L10 8" fill="none" stroke="#5a5d63" stroke-width="1.2"/></svg>
<div class="a" style="left:44px;top:864px;width:22px;height:22px;border-radius:4px;background:#43454a"></div>
<svg style="left:47px;top:868px" width="16" height="14"><path d="M1 2 H15 M1 7 H12 C14 7 14.5 8 14.5 9.5 C14.5 11 14 12 12 12 H8 M10 10 L8 12 L10 14 M1 12 H5" fill="none" stroke="#ced0d6" stroke-width="1.1"/></svg>
<div class="a" style="left:44px;top:889px;width:22px;height:22px;border-radius:4px;background:#43454a"></div>
<svg style="left:47px;top:893px" width="16" height="14"><path d="M1 2 H8 M1 6 H8 M1 10 H8 M1 13.5 H15 M12 1 V11 M9 8 L12 11 L15 8" fill="none" stroke="#ced0d6" stroke-width="1.1"/></svg>
<svg style="left:47px;top:919px" width="16" height="15"><path d="M4 5 V1.5 H12 V5 M4 11 H1.5 V5 H14.5 V11 H12 M4 8.5 H12 V14 H4 Z" fill="none" stroke="#ced0d6" stroke-width="1.1"/></svg>
<svg style="left:52px;top:949px" width="6" height="10"><path d="M1 1 L5 5 L1 9" fill="none" stroke="#ced0d6" stroke-width="1.1"/></svg>
<div class="mono" style="position:absolute;left:84px;top:804px;font-size:14px;letter-spacing:-0.4px;line-height:22px;color:#bcbec4;white-space:pre">Performing hot reload...
Syncing files to device iPhone 14 Pro Max...
Reloaded 1 of 692 libraries in 166ms (compile: 24 ms, reload: 53 ms, reassemble: 68 ms).</div>

<div class="a" style="left:1862px;top:802px;width:14px;height:169px;background:#26282b"></div>
<!-- ===== STATUS BAR ===== -->
<div class="a" style="left:12px;top:981px;width:8px;height:8px;border:1.3px solid #548af7;border-radius:2px"></div>
<div class="t" style="left:24px;top:978px;font-size:13.8px;color:#a8abb0">flutter_auto_assets</div>
<svg style="left:150px;top:980px" width="6" height="10"><path d="M1 1 L5 5 L1 9" fill="none" stroke="#a8abb0" stroke-width="1.1"/></svg>
<div class="t" style="left:164px;top:978px;font-size:13.8px;color:#a8abb0">lib</div>
<svg style="left:188px;top:980px" width="6" height="10"><path d="M1 1 L5 5 L1 9" fill="none" stroke="#a8abb0" stroke-width="1.1"/></svg>
<div class="t" style="left:204px;top:978px;font-size:13.8px;color:#a8abb0">screens</div>
<svg style="left:262px;top:980px" width="6" height="10"><path d="M1 1 L5 5 L1 9" fill="none" stroke="#a8abb0" stroke-width="1.1"/></svg>
<svg style="left:281px;top:977px" width="16" height="16"><path d="M1 4.6 L4.6 1 V4.6 Z" fill="#8a959d"/><path d="M5.8 0.8 H11.2 V15.2 H0.8 V5.8 H5.8 Z" fill="#7d878f"/><circle cx="10.3" cy="11.6" r="5.3" fill="#27282a"/><path d="M8.3 7.8 H11.3 L14 10.5 V13.6 L12.3 15.3 H9.2 L6.6 12.6 V9.5 Z" fill="#3f6db3"/><path d="M8.3 7.8 L6.6 9.5 V12.6 L9.2 15.3 H12.3 L13 14.6 Z" fill="#5aa8ee"/></svg>
<div class="t" style="left:297px;top:978px;font-size:13.8px;color:#a8abb0">entry_screen.dart</div>
<div class="t" style="left:1644px;top:978px;font-size:13.8px;color:#a8abb0">15:49</div>
<div class="t" style="left:1693px;top:978px;font-size:13.8px;color:#a8abb0">LF</div>
<div class="t" style="left:1725px;top:978px;font-size:13.8px;color:#a8abb0">UTF-8</div>
<div class="t" style="left:1781px;top:978px;font-size:13.8px;color:#a8abb0">2 spaces</div>
<svg style="left:1852px;top:977px" width="16" height="16"><rect x="1" y="8" width="10" height="7" rx="1" fill="none" stroke="#a8abb0" stroke-width="1.2"/><path d="M8 8 V5 C8 3 9.5 1.5 11.5 1.5 C13.5 1.5 15 3 15 5 V6.5" fill="none" stroke="#a8abb0" stroke-width="1.2"/></svg>
<svg style="left:1883px;top:977px" width="17" height="16"><path d="M1.5 1.5 H15.5 V12 H6 L3 14.5 V12 H1.5 Z" fill="none" stroke="#a8abb0" stroke-width="1.2" stroke-linejoin="round"/><path d="M8.5 4 V8 M8.5 9.5 V10.5" stroke="#a8abb0" stroke-width="1.3"/></svg>

<!-- ===== SIMULATOR ===== -->
<!-- shadow region -->
<div class="a" style="left:1118px;top:79px;width:758px;height:891px;overflow:hidden"><div class="a" style="left:316px;top:21px;width:389px;height:809px;border-radius:66px;box-shadow:0 10px 45px 6px rgba(0,0,0,0.55)"></div></div>
<div class="a" style="left:1429px;top:243px;width:6px;height:28px;border-radius:2px;background:#2b2b2d;border:1px solid #3a3a3c"></div>
<div class="a" style="left:1429px;top:297px;width:6px;height:56px;border-radius:2px;background:#2b2b2d;border:1px solid #3a3a3c"></div>
<div class="a" style="left:1429px;top:368px;width:6px;height:57px;border-radius:2px;background:#2b2b2d;border:1px solid #3a3a3c"></div>
<div class="a" style="left:1822px;top:335px;width:6px;height:90px;border-radius:2px;background:#2b2b2d;border:1px solid #3a3a3c"></div>
<div class="a" style="left:1434px;top:100px;width:389px;height:809px;border-radius:66px;background:#2a2a2c;border:1px solid #626264"></div>
<div class="a" style="left:1439px;top:105px;width:379px;height:799px;border-radius:61px;background:#000"></div>
<div class="a" style="left:1449px;top:115px;width:359px;height:779px;border-radius:54px;background:#f9f9f9;overflow:hidden">
  <div class="t" style="left:52px;top:16px;font-size:15px;font-weight:bold;color:#111;line-height:18px">7:24</div>
  <div class="a" style="left:127px;top:9px;width:105px;height:31px;border-radius:16px;background:#000"></div>
  <div class="a" style="left:254px;top:26px;width:3px;height:3px;border-radius:2px;background:#b0b0b0"></div>
  <div class="a" style="left:259px;top:26px;width:3px;height:3px;border-radius:2px;background:#b0b0b0"></div>
  <div class="a" style="left:264px;top:26px;width:3px;height:3px;border-radius:2px;background:#b0b0b0"></div>
  <div class="a" style="left:269px;top:26px;width:3px;height:3px;border-radius:2px;background:#b0b0b0"></div>
  <svg style="left:277px;top:17px" width="18" height="14"><path d="M1 5 C5.5 0.5 12.5 0.5 17 5 L15 7 C11.5 3.5 6.5 3.5 3 7 Z M4.5 8.5 C7 6 11 6 13.5 8.5 L11.5 10.5 C10 9 8 9 6.5 10.5 Z M8 12 L9 13 L10 12 C9.5 11.5 8.5 11.5 8 12Z" fill="#111"/></svg>
  <div class="a" style="left:301px;top:17px;width:24px;height:13px;border-radius:4px;border:1px solid #999"></div>
  <div class="a" style="left:303px;top:19px;width:20px;height:9px;border-radius:2px;background:#111"></div>
  <div class="a" style="left:326px;top:21px;width:2px;height:4px;background:#999;border-radius:1px"></div>
  <!-- illustration -->
  <svg style="left:0;top:0" width="359" height="780" viewBox="1449 115 359 780">
    <circle cx="1694" cy="401" r="56" fill="none" stroke="#3f3d56" stroke-width="3"/>
    <rect x="1658" y="392" width="23" height="34" rx="11.5" fill="#b8262f"/>
    <rect x="1683" y="378" width="22" height="48" rx="11" fill="#b8262f"/>
    <circle cx="1719" cy="414" r="11" fill="#b8262f"/>
    <path d="M1608 458.5 H1684" fill="none" stroke="#3f3d56" stroke-width="1.6"/>
    <circle cx="1608" cy="459" r="8" fill="#3f3d56"/>
    <!-- hair line -->
    <path d="M1545 412 C1562 416 1578 408 1572 398 C1565 387 1535 385 1522 397 C1508 412 1512 432 1518 446 C1524 460 1515 470 1507 466 C1500 462 1503 452 1511 453 C1518 454 1519 462 1514 465" fill="none" stroke="#2f2e41" stroke-width="1.3"/>
    <!-- head -->
    <circle cx="1551" cy="434" r="24" fill="#b8262f"/>
    <path d="M1531 436 C1540 428 1556 430 1572 423" fill="none" stroke="#2f2e41" stroke-width="1.1"/>
    <path d="M1541 437 H1546 M1557 434 H1562" stroke="#2f2e41" stroke-width="0.9"/>
    <path d="M1553 437 L1551 444 L1556 446" fill="none" stroke="#2f2e41" stroke-width="0.9"/>
    <!-- body -->
    <path d="M1519 517 C1517 485 1532 463 1553 463 C1570 463 1582 472 1587 485 L1578 500 L1572 538 H1528 C1521 538 1520 528 1519 517 Z" fill="#2f2e41"/>
    <!-- arms -->
    <path d="M1582 482 L1603 498 L1598 504 L1578 492 Z" fill="#b8262f"/>
    <path d="M1544 505 L1553 499 L1576 528 L1567 534 Z" fill="#b8262f"/>
    <!-- laptop -->
    <rect x="1570" y="499.5" width="63" height="38" rx="2" fill="#fff" stroke="#3f3d56" stroke-width="1.1"/>
    <circle cx="1602" cy="519" r="3.3" fill="#b8262f"/>
    <rect x="1553" y="533.5" width="19" height="4" fill="#fff"/>
    <!-- legs -->
    <path d="M1553 539 H1604 V576 H1592 V553 H1590 V580 H1577 V553 C1565 553 1556 550 1553 539Z" fill="#b8262f"/>
    <!-- chair -->
    <path d="M1521 540 C1521 547 1525 550 1533 550 H1577 V544 H1540 Z" fill="#2f2e41"/>
    <rect x="1549" y="550" width="6" height="40" fill="#2f2e41"/>
    <path d="M1532 594 C1536 587 1569 587 1574 594 Z" fill="#2f2e41"/>
  </svg>
  <div class="t" style="left:0;top:525px;width:359px;text-align:center;font-size:14.6px;color:#1c1c1e;line-height:18px;-webkit-text-stroke:0.35px #1c1c1e">Flutter Gen Assets</div>
  <svg style="left:167px;top:555px" width="28" height="32"><path d="M10 1.3 H2.6 C1.8 1.3 1.2 1.9 1.2 2.7 V28.1 C1.2 28.9 1.8 29.5 2.6 29.5 H21.6 C22.4 29.5 23 28.9 23 28.1 V17" fill="none" stroke="#45a6de" stroke-width="1.3"/><path d="M21.3 0.8 V11.5 M16 6 H26.5" stroke="#45a6de" stroke-width="1.4"/><path d="M7 10.8 H14 M7 17.3 H17 M7 23.5 H14" stroke="#45a6de" stroke-width="1.3"/></svg>
  <div class="a" style="left:116px;top:767px;width:128px;height:5px;border-radius:3px;background:#111"></div>
</div>

<!-- simulator title bar window -->
<div class="a" style="left:1406px;top:36px;width:445px;height:52px;border-radius:10px;background:#363636;border:1px solid #444;box-shadow:0 4px 18px rgba(0,0,0,0.45)"></div>
<div class="a" style="left:1426px;top:56px;width:12px;height:12px;border-radius:6px;background:#ff5f57"></div>
<div class="a" style="left:1446px;top:56px;width:12px;height:12px;border-radius:6px;background:#febc2e"></div>
<div class="a" style="left:1466px;top:56px;width:12px;height:12px;border-radius:6px;background:#28c840"></div>
<div class="t" style="left:1497px;top:48px;font-size:13.2px;font-weight:bold;color:#ececec">iPhone 14 Pro Max</div>
<div class="t" style="left:1497px;top:62px;font-size:11.3px;color:#a0a0a0;line-height:14px">iOS 16.4</div>
<svg style="left:1709px;top:51px" width="22" height="20"><path d="M2 10 L11 2 L20 10 M4.5 8 V18.5 H9 V13 H13 V18.5 H17.5 V8 M16 3 V6.5" fill="none" stroke="#c8c8c8" stroke-width="1.5" stroke-linejoin="round"/><rect x="9" y="13" width="4" height="5.5" fill="#c8c8c8"/></svg>
<svg style="left:1758px;top:52px" width="23" height="19"><path d="M3 14 V4 C3 3 3.5 2 5 2 H17" fill="none" stroke="#c8c8c8" stroke-width="1.4"/><rect x="5.5" y="5" width="16" height="12.5" rx="2" fill="none" stroke="#c8c8c8" stroke-width="1.4"/><circle cx="13.5" cy="11.5" r="3.5" fill="none" stroke="#c8c8c8" stroke-width="1.4"/><path d="M11 5 L12 3.5 H15 L16 5" fill="none" stroke="#c8c8c8" stroke-width="1.2"/></svg>
<svg style="left:1804px;top:50px" width="20" height="22"><rect x="6" y="8" width="12.5" height="12.5" rx="1.5" fill="none" stroke="#c8c8c8" stroke-width="1.5"/><path d="M3 10 V5.5 C3 4 4 3 5.5 3 H9 M7 0.8 L9.3 3 L7 5.2" fill="none" stroke="#c8c8c8" stroke-width="1.4"/></svg>

</body></html>
